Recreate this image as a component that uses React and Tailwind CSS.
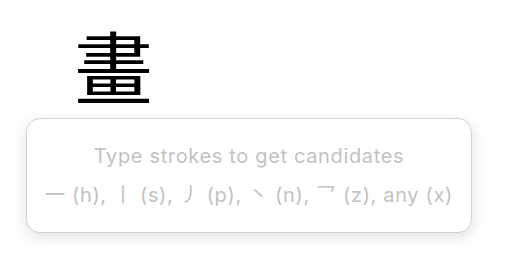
export default function App() {
  return (
    <div className="w-[512px] h-[275px] bg-white overflow-hidden flex flex-col">
      <div className="pl-[74px] pt-[19px] h-[118px]">
        <div
          className="text-[79px] leading-[92px] text-black"
          style={{ fontFamily: '"Noto Sans CJK TC", sans-serif' }}
        >
          畫
        </div>
      </div>
      <div className="ml-[26px] w-[446px] h-[115px] rounded-[14px] border border-[#d4d4d4] bg-white shadow-[0_4px_14px_rgba(0,0,0,0.12)] flex flex-col items-center pt-[24px] text-[#c2c2c2] text-[20px] tracking-[0.65px]" style={{ fontFamily: 'Inter, "Noto Sans CJK TC", sans-serif' }}>
        <div className="leading-[26px]">Type strokes to get candidates</div>
        <div className="leading-[26px] mt-[13px]">一 (h), 丨 (s), 丿 (p), 丶 (n), 乛 (z), any (x)</div>
      </div>
    </div>
  );
}
